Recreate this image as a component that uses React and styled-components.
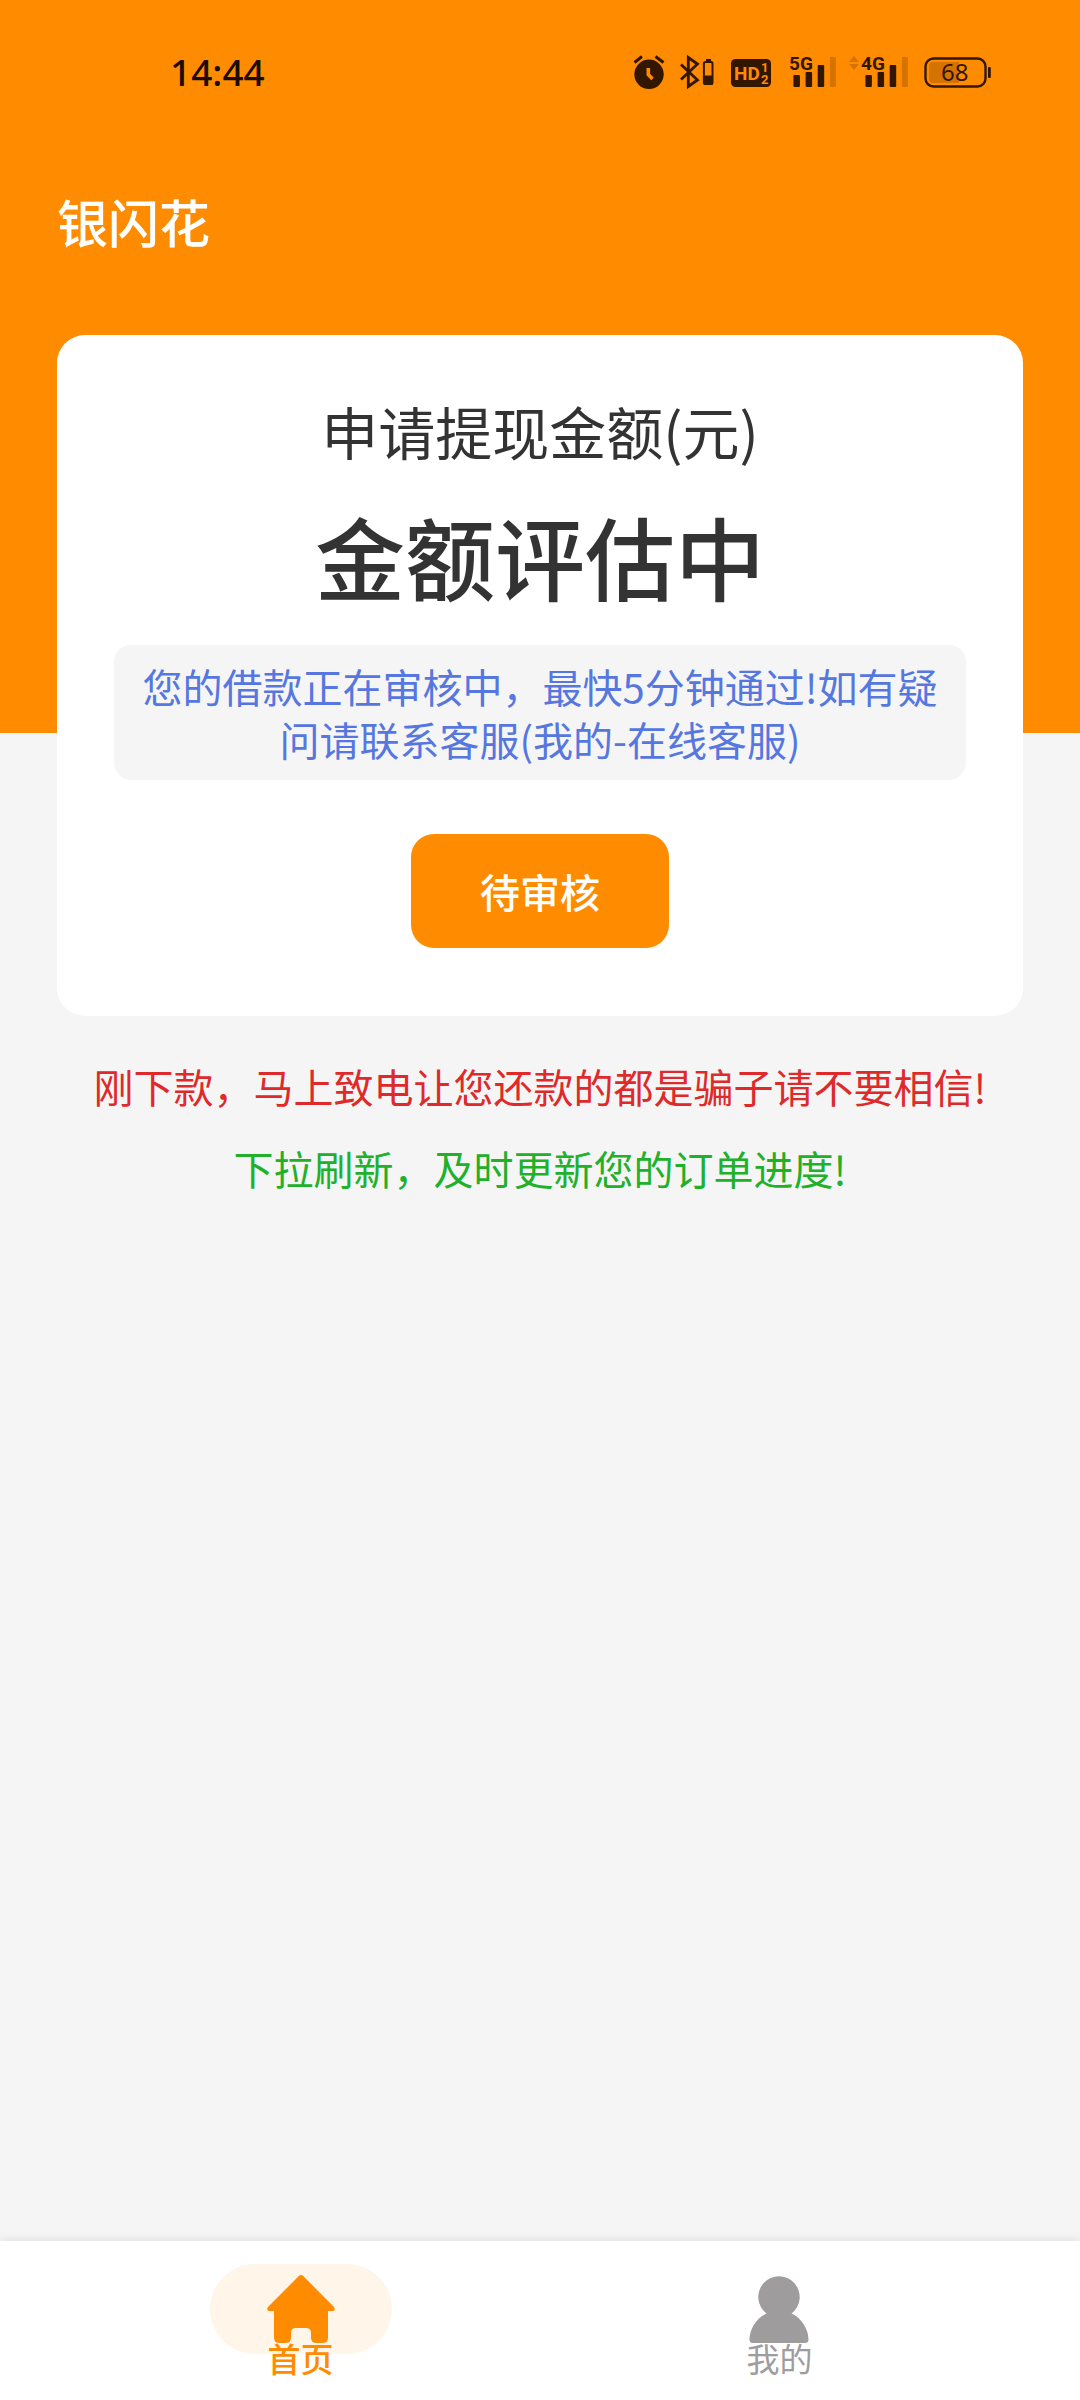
import React from "react";
import styled, { createGlobalStyle } from "styled-components";

const ORANGE = "#ff8c00";
const INK = "#321600";

const GlobalStyle = createGlobalStyle`
  * {
    box-sizing: border-box;
  }
  body {
    margin: 0;
    background: #f5f5f5;
    font-family: "Noto Sans CJK SC", sans-serif;
  }
  h1, h2, p {
    margin: 0;
  }
`;

const Page = styled.div`
  min-height: 100vh;
  display: flex;
  flex-direction: column;
`;

const Header = styled.header`
  background: ${ORANGE};
  padding-bottom: 456px;
`;

const StatusBar = styled.div`
  display: flex;
  justify-content: space-between;
  align-items: center;
  height: 144px;
  padding: 0 89px 0 170px;
`;

const Time = styled.span`
  font: 500 37px/44px "Noto Sans", sans-serif;
  color: #1a0c00;
`;

const StatusIcons = styled.div`
  display: flex;
  align-items: center;
  gap: 12px;
`;

const StatusIcon = styled.svg`
  display: block;
  height: 48px;
  fill: ${INK};
  stroke: none;
  font-family: Roboto, sans-serif;
  font-weight: 700;
`;

const AppTitle = styled.h1`
  padding: 39px 57px 18px;
  font-size: 51px;
  line-height: 76px;
  font-weight: 500;
  color: #fff;
`;

const Main = styled.main`
  flex: 1;
  margin-top: -398px;
  padding: 0 57px;
  text-align: center;
`;

const Card = styled.section`
  padding: 53px 57px 68px;
  border-radius: 28px;
  background: #fff;
  color: #333;
`;

const CardTitle = styled.h2`
  font-size: 57px;
  line-height: 84px;
  font-weight: 400;
`;

const Amount = styled.p`
  margin-top: 18px;
  font-size: 90px;
  line-height: 130px;
  font-weight: 500;
`;

const Tip = styled.p`
  margin-top: 25px;
  padding: 15px 24px 14px;
  border-radius: 17px;
  background: #f5f5f5;
  font-size: 40px;
  line-height: 53px;
  color: #5677e0;
`;

const StatusButton = styled.button`
  display: block;
  margin: 54px auto 0;
  padding: 0 69px;
  height: 114px;
  border: 0;
  border-radius: 23px;
  background: ${ORANGE};
  font: inherit;
  font-size: 40px;
  font-weight: 500;
  color: #fff;
`;

const Notice = styled.p`
  margin-top: ${(props) => props.$gap};
  font-size: 40px;
  line-height: 60px;
  color: ${(props) => props.$color};
`;

const TabBar = styled.nav`
  display: flex;
  height: 159px;
  padding: 23px 61px 0;
  background: #fff;
  box-shadow: 0 -2px 8px rgba(0, 0, 0, 0.08);
`;

const Tab = styled.a`
  flex: 1;
  display: flex;
  flex-direction: column;
  align-items: center;
  font-size: 33px;
  line-height: 40px;
  font-weight: ${(props) => (props.$active ? 500 : 400)};
  color: ${(props) => (props.$active ? ORANGE : "#9e9c9d")};
  text-decoration: none;
`;

const TabIcon = styled.span`
  display: flex;
  justify-content: center;
  width: 182px;
  height: 90px;
  margin-bottom: -16px;
  padding-top: 11px;
  border-radius: 45px;
  background: ${(props) => (props.$active ? "#fff5e8" : "transparent")};
`;

function AlarmIcon() {
  return (
    <StatusIcon width="34" viewBox="0 -6 34 48" aria-hidden="true">
      <circle cx="16" cy="20.3" r="14.7" />
      <path d="M1.5 8.5L9 2.5M22.5 2.5L30.5 8.5" stroke={INK} strokeWidth="3" />
      <path d="M15.3 14V20.5L19.5 25" fill="none" stroke={ORANGE} strokeWidth="3.6" />
    </StatusIcon>
  );
}

function BluetoothIcon() {
  return (
    <StatusIcon width="38" viewBox="0 -6 38 48" aria-hidden="true">
      <path
        d="M2 10.5L18.5 26L9.3 32.5V3.5L18.5 10L2 25.5"
        fill="none"
        stroke={INK}
        strokeWidth="2.8"
      />
      <rect x="27" y="5" width="5" height="2.5" />
      <rect x="24.9" y="7.9" width="8.6" height="22.2" rx="1.6" fill="none" stroke={INK} strokeWidth="2" />
      <rect x="25" y="21.5" width="9" height="9" />
    </StatusIcon>
  );
}

function HdIcon() {
  return (
    <StatusIcon width="48" viewBox="0 -6 48 48" role="img" aria-label="HD">
      <rect x="2" y="5" width="40" height="28" rx="4.5" />
      <g fill={ORANGE}>
        <text x="5" y="26" fontSize="19">HD</text>
        <text x="32" y="18" fontSize="13">1</text>
        <text x="32" y="30" fontSize="13">2</text>
      </g>
    </StatusIcon>
  );
}

function SignalBars({ x }) {
  return (
    <g transform={`translate(${x} 0)`}>
      <rect x="0" y="21" width="6.5" height="12" rx="1" />
      <rect x="12.2" y="18" width="6.5" height="15" rx="1" />
      <rect x="24.3" y="11" width="6.5" height="22" rx="1" />
      <rect x="36.5" y="3" width="6" height="30" rx="1" fill="#d67300" />
    </g>
  );
}

function Signal5G() {
  return (
    <StatusIcon width="48" viewBox="0 -6 48 48" role="img" aria-label="5G">
      <text x="0" y="16" fontSize="19">5G</text>
      <SignalBars x={4.4} />
    </StatusIcon>
  );
}

function Signal4G() {
  return (
    <StatusIcon width="62" viewBox="0 -6 62 48" role="img" aria-label="4G">
      <path d="M5 2L10 8H0zM0 10H10L5 16z" fill="#d67300" />
      <text x="12" y="16" fontSize="19">4G</text>
      <SignalBars x={16.4} />
    </StatusIcon>
  );
}

function BatteryIcon() {
  return (
    <StatusIcon width="68" viewBox="0 -6 68 48" role="img" aria-label="68%">
      <rect x="2.5" y="4.5" width="60" height="28" rx="8" fill="none" stroke={INK} strokeWidth="2.4" />
      <path d="M10 8H36V29H10Q6 29 6 25V12Q6 8 10 8z" fill="#d67300" />
      <rect x="65" y="13" width="2.8" height="11" rx="1" />
      <text x="18" y="27" fontSize="24" fontFamily="Noto Sans" fontWeight="400">68</text>
    </StatusIcon>
  );
}

function HomeIcon() {
  return (
    <svg width="68" height="68" viewBox="0 0 68 68" fill="currentColor" aria-hidden="true">
      <path d="M31.8 1Q34 -1 36.2 1L67 32Q69 36 65.5 36H61V62.5Q61 68 55.5 68H49.5Q44 68 44 62.5V58Q44 53 39 53H29Q24 53 24 58V62.5Q24 68 18.5 68H12.5Q7 68 7 62.5V36H2.5Q-1 36 1 32z" />
    </svg>
  );
}

function UserIcon() {
  return (
    <svg width="68" height="68" viewBox="0 0 68 68" fill="currentColor" aria-hidden="true">
      <path d="M20.5 38.5A20.7 20.7 0 1 1 45.5 38.5C55 42.5 62.500 54 62.500 64.5Q62.500 68 59 68H7Q3.5 68 3.5 64.5C3.5 54 11 42.5 20.5 38.5z" />
    </svg>
  );
}

function App() {
  return (
    <Page>
      <GlobalStyle />
      <Header>
        <StatusBar>
          <Time>14:44</Time>
          <StatusIcons>
            <AlarmIcon />
            <BluetoothIcon />
            <HdIcon />
            <Signal5G />
            <Signal4G />
            <BatteryIcon />
          </StatusIcons>
        </StatusBar>
        <AppTitle>银闪花</AppTitle>
      </Header>
      <Main>
        <Card>
          <CardTitle>申请提现金额(元)</CardTitle>
          <Amount>金额评估中</Amount>
          <Tip>您的借款正在审核中，最快5分钟通过!如有疑问请联系客服(我的-在线客服)</Tip>
          <StatusButton type="button">待审核</StatusButton>
        </Card>
        <Notice $gap="40px" $color="#de2a2a">
          刚下款，马上致电让您还款的都是骗子请不要相信!
        </Notice>
        <Notice $gap="22px" $color="#20b02a">
          下拉刷新，及时更新您的订单进度!
        </Notice>
      </Main>
      <TabBar>
        <Tab href="#home" $active>
          <TabIcon $active>
            <HomeIcon />
          </TabIcon>
          首页
        </Tab>
        <Tab href="#mine">
          <TabIcon>
            <UserIcon />
          </TabIcon>
          我的
        </Tab>
      </TabBar>
    </Page>
  );
}

export default App;
